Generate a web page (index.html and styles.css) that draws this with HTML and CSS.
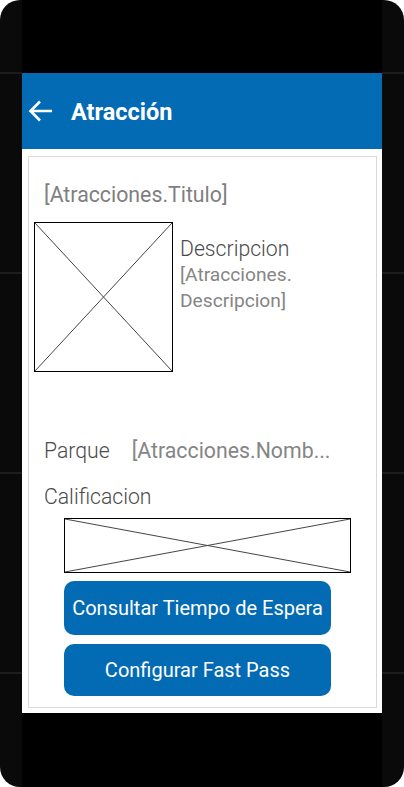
FILE: index.html
```html
<!DOCTYPE html>
<html>
  <head>
    <meta http-equiv="Content-Type" content="text/html;charset=utf-8" />
    <title>Atracción</title>
    <link rel="stylesheet" href="styles.css">
  </head>

  <body>
    <div class="device">
      <div class="screen">
        <div class="status-area"></div>

        <!-- App bar -->
        <div class="app-bar">
          <svg class="back-icon" width="26" height="24" viewBox="0 0 26 24">
            <path d="M25 12H3.5M13 2.5L3.5 12L13 21.5" fill="none" stroke="#ffffff" stroke-width="2.6" />
          </svg>
          <span class="app-title">Atracción</span>
        </div>

        <div class="content">
          <div class="card">
            <div class="attraction-title">[Atracciones.Titulo]</div>

            <div class="detail-row">
              <div class="placeholder image-box">
                <svg viewBox="0 0 100 100" preserveAspectRatio="none">
                  <line x1="0" y1="0" x2="100" y2="100" />
                  <line x1="100" y1="0" x2="0" y2="100" />
                </svg>
              </div>
              <div class="description">
                <div class="field-label">Descripcion</div>
                <div class="description-value">[Atracciones.<br />Descripcion]</div>
              </div>
            </div>

            <div class="park-row">
              <span class="field-label">Parque</span>
              <span class="field-value">[Atracciones.Nomb...</span>
            </div>

            <div class="field-label rating-label">Calificacion</div>

            <div class="placeholder rating-box">
              <svg viewBox="0 0 100 100" preserveAspectRatio="none">
                <line x1="0" y1="0" x2="100" y2="100" />
                <line x1="100" y1="0" x2="0" y2="100" />
              </svg>
            </div>

            <button class="action-button wait-button">Consultar Tiempo de Espera</button>
            <button class="action-button fastpass-button">Configurar Fast Pass</button>
          </div>
        </div>

        <div class="bottom-area"></div>
      </div>
    </div>
  </body>
</html>
```

FILE: styles.css
```css
body {
  background-color: #ffffff;
  font-family: Roboto, "Liberation Sans", sans-serif;
  padding: 0;
  margin: 0;
}

.device {
  width: 404px;
  height: 787px;
  border-radius: 20px;
  background-color: #0a0a0a;
  background-image: repeating-linear-gradient(
    to bottom,
    #1c1c1c 0,
    #1c1c1c 2px,
    transparent 2px,
    transparent 200px
  );
  background-position: 0 72px;
  overflow: hidden;
}

.screen {
  width: 360px;
  height: 787px;
  margin: 0 22px;
  background-color: #000;
  display: flex;
  flex-direction: column;
}

.status-area {
  height: 73px;
}

.app-bar {
  height: 76px;
  background-color: #036ab4;
  display: flex;
  align-items: center;
  padding-left: 5px;
}

.back-icon {
  display: block;
}

.app-title {
  margin-left: 18px;
  color: #ffffff;
  font-size: 23.5px;
  font-weight: bold;
  margin-top: 1px;
}

.content {
  height: 564px;
  background-color: #ffffff;
  padding: 7px 5px 5px 6px;
  box-sizing: border-box;
}

.card {
  height: 100%;
  box-sizing: border-box;
  border: 1px solid #d9d9d9;
  padding: 26px 0 0 5px;
  display: flex;
  flex-direction: column;
  align-items: flex-start;
}

.attraction-title {
  margin-left: 10px;
  color: #7f7f7f;
  font-size: 21.3px;
  line-height: 24px;
}

.detail-row {
  display: flex;
  margin-top: 15px;
}

.placeholder {
  border: 1px solid #000;
  box-sizing: border-box;
}

.placeholder svg {
  display: block;
  width: 100%;
  height: 100%;
}

.placeholder line {
  stroke: #444;
  stroke-width: 1;
  vector-effect: non-scaling-stroke;
}

.image-box {
  width: 139px;
  height: 150px;
}

.description {
  margin-left: 7px;
  padding-top: 15px;
}

.field-label {
  color: #4a4a4a;
  font-size: 21.2px;
  font-weight: 300;
  line-height: 24px;
}

.description-value {
  color: #858585;
  font-size: 19.2px;
  line-height: 26px;
  margin-top: 1px;
}

.park-row {
  margin: 67px 0 0 10px;
  display: flex;
  gap: 22px;
  line-height: 24px;
}

.field-value {
  color: #858585;
  font-size: 21.3px;
}

.rating-label {
  margin: 22px 0 0 10px;
}

.rating-box {
  margin: 9px 0 0 30px;
  width: 287px;
  height: 55px;
}

.action-button {
  margin-left: 30px;
  width: 267px;
  border: none;
  border-radius: 10px;
  background-color: #036ab4;
  color: #ffffff;
  font-family: Roboto, "Liberation Sans", sans-serif;
  font-size: 20px;
  padding: 0;
}

.wait-button {
  margin-top: 8px;
  height: 54px;
}

.fastpass-button {
  margin-top: 9px;
  height: 52px;
}

.bottom-area {
  flex: 1;
}
```
